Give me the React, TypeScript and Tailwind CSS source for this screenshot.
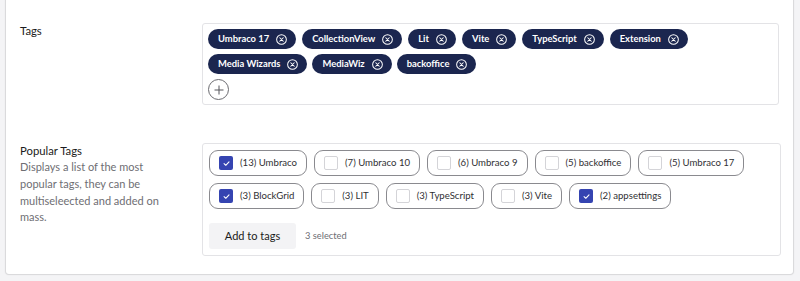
import React from "react";

const tags1 = ["Umbraco 17", "CollectionView", "Lit", "Vite", "TypeScript", "Extension"];
const tags2 = ["Media Wizards", "MediaWiz", "backoffice"];

const popular1: [string, boolean][] = [
  ["(13) Umbraco", true],
  ["(7) Umbraco 10", false],
  ["(6) Umbraco 9", false],
  ["(5) backoffice", false],
  ["(5) Umbraco 17", false],
];
const popular2: [string, boolean][] = [
  ["(3) BlockGrid", true],
  ["(3) LIT", false],
  ["(3) TypeScript", false],
  ["(3) Vite", false],
  ["(2) appsettings", true],
];

function CircleX() {
  return (
    <svg width="11" height="11" viewBox="0 0 12 12" fill="none" stroke="white" strokeWidth="1.1" strokeLinecap="round">
      <circle cx="6" cy="6" r="5.3" />
      <path d="M4.1 4.1 7.9 7.9 M7.9 4.1 4.1 7.9" />
    </svg>
  );
}

function Tag({ label }: { label: string }) {
  return (
    <div className="flex h-[20px] items-center gap-[7px] whitespace-nowrap rounded-full bg-[#1b264f] pl-[10px] pr-[9px] text-[9.4px] font-bold text-white">
      <span>{label}</span>
      <CircleX />
    </div>
  );
}

function Check({ on }: { on: boolean }) {
  if (on)
    return (
      <div className="flex h-[14px] w-[14px] items-center justify-center rounded-[2px] bg-[#3544b1]">
        <svg width="9" height="9" viewBox="0 0 10 10" fill="none" stroke="white" strokeWidth="1.2" strokeLinecap="round" strokeLinejoin="round">
          <path d="M2.3 5.2 4.2 7 7.8 3.2" />
        </svg>
      </div>
    );
  return <div className="h-[14px] w-[14px] rounded-[2px] border border-[#d4d4d8] bg-white" />;
}

function Pop({ label, on }: { label: string; on: boolean }) {
  return (
    <div className="flex h-[26px] items-center gap-[7px] whitespace-nowrap rounded-[9px] border border-[#8a8a8f] pl-[9px] pr-[9px] text-[9.6px] text-[#303033]">
      <Check on={on} />
      <span>{label}</span>
    </div>
  );
}

export default function App() {
  return (
    <div className="h-[281px] w-[800px] bg-[#f4f4f6] pl-[6px] pr-[7px]" style={{ fontFamily: "Lato, 'Open Sans', sans-serif" }}>
      <div className="h-[274px] rounded-b-[3px] bg-white shadow-[0_0_1px_1px_rgba(0,0,0,0.12)] pt-[23px] pl-[14px]">
        <div className="flex">
          <div className="w-[182px] text-[11.3px] leading-[16px] text-[#1b1b20]">Tags</div>
          <div className="w-[577px] rounded-[3px] border border-[#e3e3e6] p-[5px] pb-[4px]">
            <div className="flex flex-col gap-[5px]">
              <div className="flex gap-[6px]">
                {tags1.map((t) => (
                  <Tag key={t} label={t} />
                ))}
              </div>
              <div className="flex gap-[5px]">
                {tags2.map((t) => (
                  <Tag key={t} label={t} />
                ))}
              </div>
              <div className="flex h-[21px] w-[21px] items-center justify-center rounded-full border border-[#6b6b70]">
                <svg width="10" height="10" viewBox="0 0 10 10" stroke="#55555a" strokeWidth="1">
                  <path d="M5 0.5v9M0.5 5h9" />
                </svg>
              </div>
            </div>
          </div>
        </div>

        <div className="mt-[38px] flex">
          <div className="w-[182px]">
            <div className="text-[11.3px] leading-[16px] text-[#1b1b20]">Popular Tags</div>
            <div className="w-[162px] text-[11px] leading-[16.8px] text-[#6e6e73]">
              Displays a list of the most popular tags, they can be multiseleected and added on mass.
            </div>
          </div>
          <div className="w-[579px] rounded-[3px] border border-[#e3e3e6] p-[6px] pb-[6px]">
            <div className="flex flex-col gap-[7px]">
              <div className="flex gap-[7px]">
                {popular1.map(([l, o]) => (
                  <Pop key={l} label={l} on={o} />
                ))}
              </div>
              <div className="flex gap-[7px]">
                {popular2.map(([l, o]) => (
                  <Pop key={l} label={l} on={o} />
                ))}
              </div>
            </div>
            <div className="mt-[14px] flex items-center gap-[9px]">
              <div className="flex h-[26px] w-[87px] items-center justify-center rounded-[3px] bg-[#f3f3f5] text-[11px] text-[#1b1b20]">
                Add to tags
              </div>
              <span className="text-[9.3px] text-[#6e6e73]">3 selected</span>
            </div>
          </div>
        </div>
      </div>
    </div>
  );
}
